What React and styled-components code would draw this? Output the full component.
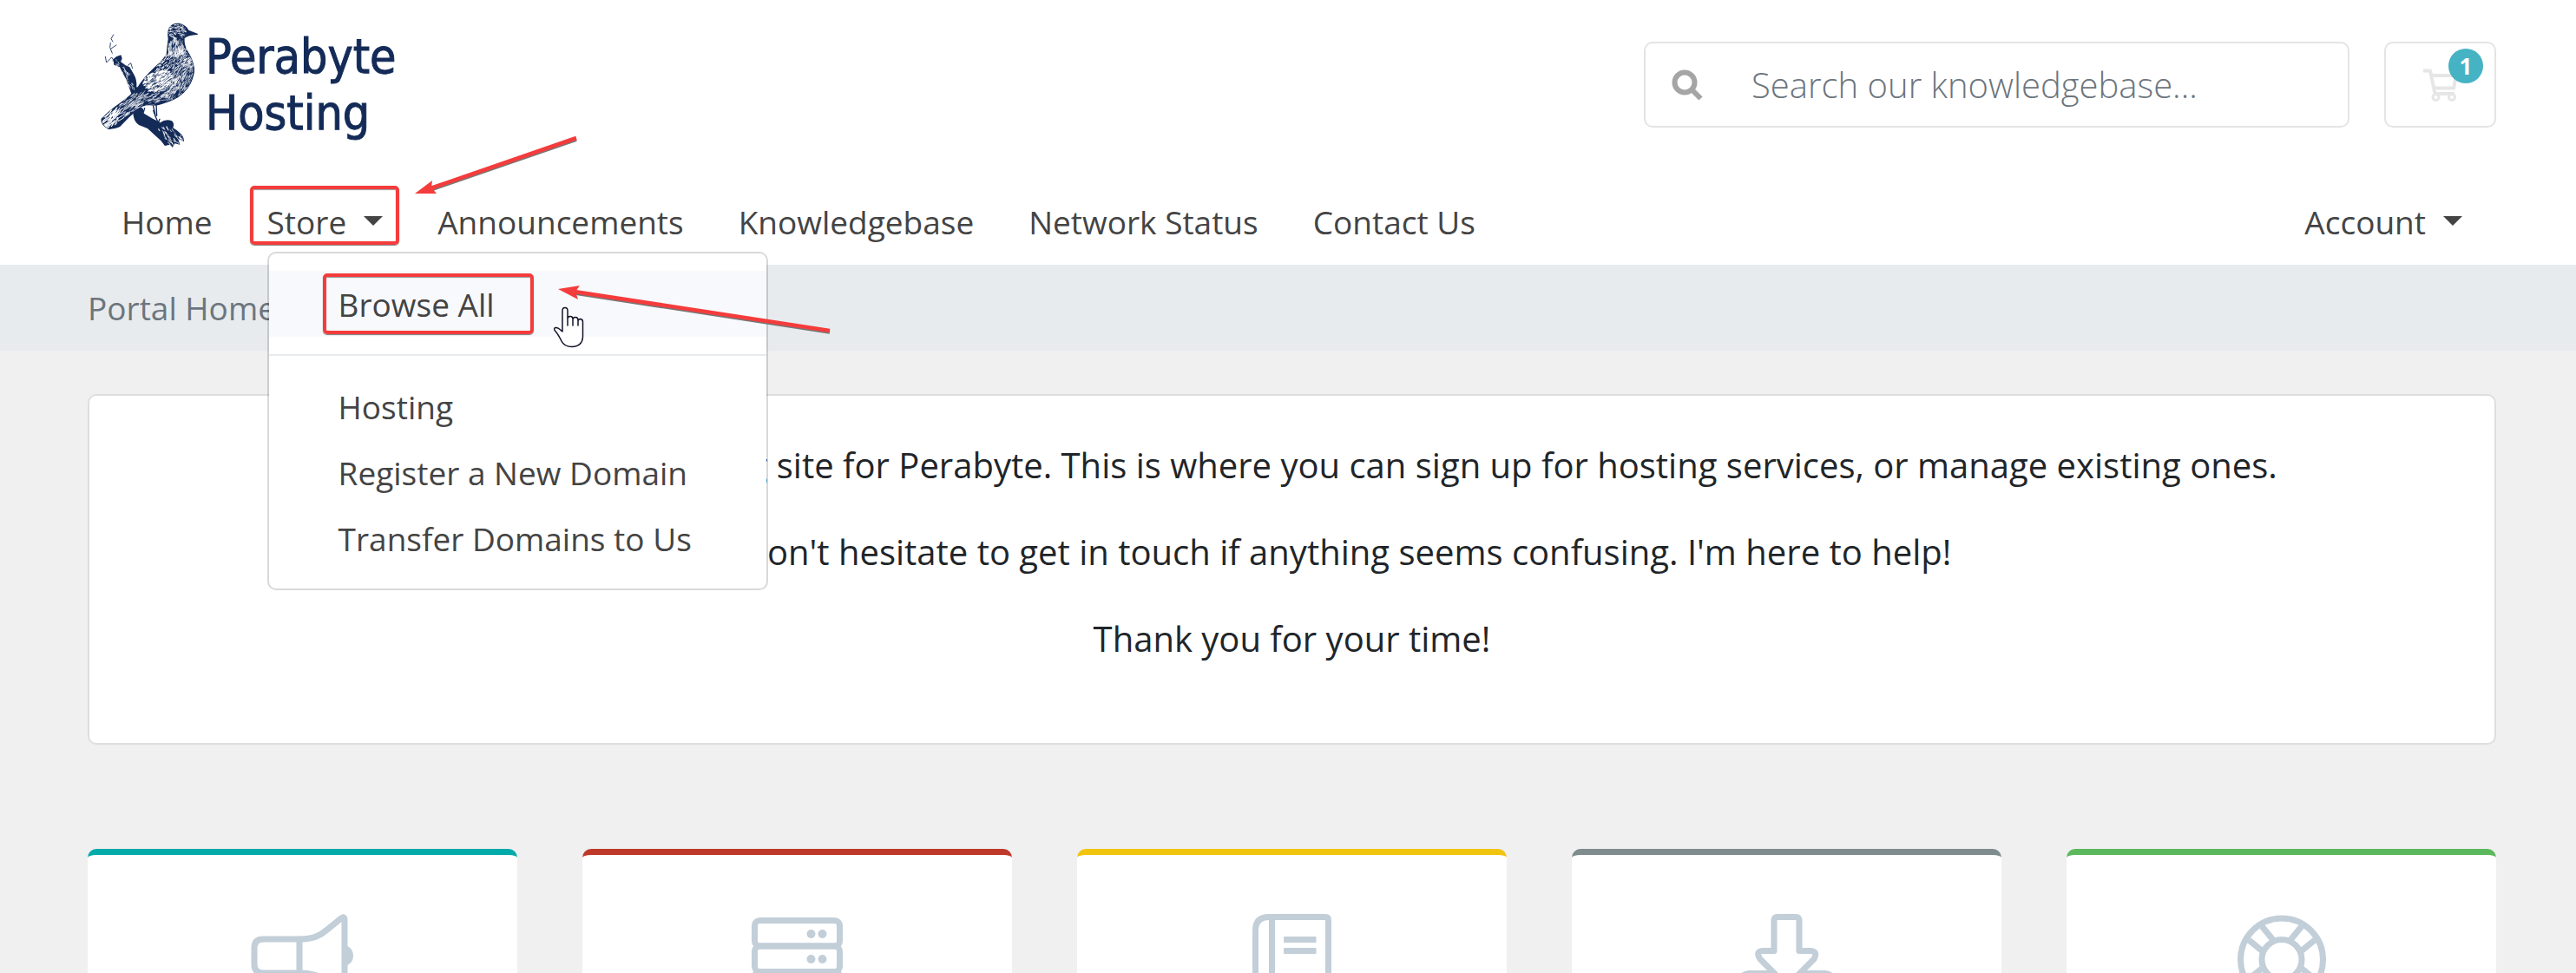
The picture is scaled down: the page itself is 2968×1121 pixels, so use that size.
import React from "react";
import styled, { createGlobalStyle } from "styled-components";

const GlobalStyle = createGlobalStyle`
  *, *::before, *::after { box-sizing: border-box; }
  body {
    margin: 0;
    background: #f0f0f0;
    color: #212529;
    font-family: "Open Sans", "Noto Sans", sans-serif;
    font-size: 40px;
    line-height: 60px;
  }
  a { color: inherit; text-decoration: none; }
`;

const Page = styled.div`
  height: 100vh;
  overflow: hidden;
`;

const Container = styled.div`
  padding: 0 92px 0 101px;
`;

const Header = styled.header`
  background: #fff;
`;

const TopBar = styled(Container)`
  display: flex;
  align-items: center;
  padding-top: 20px;
  padding-bottom: 20px;
`;

const Brand = styled.a`
  display: flex;
  align-items: center;
  margin-right: auto;
  padding-left: 9px;
  color: #142b58;
`;

const BrandName = styled.span`
  margin-left: -3px;
  font-family: "DejaVu Sans Condensed", "DejaVu Sans", sans-serif;
  font-stretch: condensed;
  font-size: 55px;
  line-height: 65px;
  -webkit-text-stroke: 1px #142b58;
`;

const SearchForm = styled.form`
  display: flex;
  align-items: center;
  width: 813px;
  height: 99px;
  border: 2px solid #e4e4e4;
  border-radius: 10px;
`;

const SearchButton = styled.button`
  display: flex;
  padding: 0 30px;
  border: 0;
  background: none;
`;

const SearchInput = styled.input`
  flex: 1;
  min-width: 0;
  padding: 0 26px;
  border: 0;
  outline: 0;
  background: none;
  font: 300 40px/60px "Open Sans", "Noto Sans", sans-serif;
  &::placeholder { color: #6c757d; opacity: 1; }
`;

const CartButton = styled.button`
  position: relative;
  display: flex;
  align-items: center;
  justify-content: center;
  width: 129px;
  height: 99px;
  margin-left: 40px;
  padding: 0;
  border: 2px solid #e4e4e4;
  border-radius: 10px;
  background: #fff;
`;

const CartBadge = styled.span`
  position: absolute;
  top: 6px;
  right: 13px;
  width: 40px;
  height: 40px;
  border-radius: 50%;
  background: #45b3c4;
  color: #fff;
  font: 700 26px/40px "Open Sans", "Noto Sans", sans-serif;
`;

const NavBar = styled(Container)`
  display: flex;
  justify-content: space-between;
  padding-top: 26px;
  padding-bottom: 15px;
`;

const NavList = styled.ul`
  display: flex;
  gap: 63px;
  margin: 0;
  padding: 0 39px;
  list-style: none;
`;

const NavItem = styled.li`
  position: relative;
`;

const NavLink = styled.a`
  display: flex;
  align-items: center;
  padding: 6px 0;
  color: #444;
  font-size: 37px;
  line-height: 57px;
`;

const Caret = styled.span`
  margin: 0 0 3px 20px;
  border: 11px solid transparent;
  border-top-color: #444;
  border-bottom: 0;
`;

const Menu = styled.div`
  position: absolute;
  z-index: 2;
  top: 100%;
  left: 0;
  width: 577px;
  padding: 20px 0;
  border: 2px solid rgba(0, 0, 0, 0.15);
  border-radius: 10px;
  background: #fff;
  background-clip: padding-box;
`;

const MenuLink = styled.a`
  position: relative;
  display: block;
  padding: 10px 80px 9px;
  background: ${(p) => (p.$hover ? "#f8f9fc" : "transparent")};
  color: #444;
  font-size: 37px;
  line-height: 57px;
  white-space: nowrap;
`;

const MenuDivider = styled.hr`
  height: 2px;
  margin: 20px 0;
  border: 0;
  background: #e7ebee;
`;

const Highlight = styled.span`
  position: absolute;
  z-index: 3;
  top: ${(p) => p.$top}px;
  left: ${(p) => p.$left}px;
  width: ${(p) => p.$width}px;
  height: ${(p) => p.$height}px;
  border: 4px solid #f43c3c;
  border-radius: 5px;
  box-shadow: 0 1px 1px rgba(0, 0, 0, 0.5), inset 0 1px 1px rgba(0, 0, 0, 0.4);
`;

const Annotations = styled.svg`
  position: absolute;
  z-index: 4;
  top: 0;
  left: 0;
  pointer-events: none;
`;

const Breadcrumb = styled(Container)`
  padding-top: 21px;
  padding-bottom: 21px;
  background: #e7ebee;
  color: #6c757d;
  font-size: 37px;
  line-height: 57px;
`;

const Main = styled.main`
  padding: 50px 92px 0 101px;
`;

const WelcomeCard = styled.section`
  padding: 50px;
  border: 2px solid #dedede;
  border-radius: 10px;
  background: #fff;
  text-align: center;
`;

const Paragraph = styled.p`
  margin: 0 0 40px;
`;

const Tiles = styled.div`
  display: grid;
  grid-template-columns: repeat(5, 1fr);
  gap: 75px;
  margin-top: 120px;
`;

const Tile = styled.a`
  display: flex;
  justify-content: center;
  padding: 65px 0;
  border-top: 7px solid ${(p) => p.$accent};
  border-radius: 10px;
  background: #fff;
`;

const INK = "#142b58";

// Small seeded generator, so the engraving is the same on each render.
function random(seed) {
  let s = seed;
  return () => {
    s = (s * 16807) % 2147483647;
    return s / 2147483647;
  };
}

// Short strokes scattered over an ellipse, all near one direction.
function hatch(seed, count, cx, cy, rx, ry, tilt, dir, len) {
  const r = random(seed);
  const t = (tilt * Math.PI) / 180;
  let d = "";
  for (let i = 0; i < count; i++) {
    const a = r() * Math.PI * 2;
    const q = Math.sqrt(r());
    const u = Math.cos(a) * q * rx;
    const v = Math.sin(a) * q * ry;
    const x = cx + u * Math.cos(t) - v * Math.sin(t);
    const y = cy + u * Math.sin(t) + v * Math.cos(t);
    const g = ((dir + (r() - 0.5) * 34) * Math.PI) / 180;
    const l = len * (0.4 + r());
    d += `M${x.toFixed(1)} ${y.toFixed(1)}l${(Math.cos(g) * l).toFixed(1)} ${(Math.sin(g) * l).toFixed(1)}`;
  }
  return d;
}

const BODY =
  "M354 57L322 44Q314 27 292 21Q266 18 254 36Q247 52 251 74Q247 100 245 128Q228 152 200 176Q168 206 146 240Q120 272 84 296Q44 324 20 350Q16 370 44 386Q62 388 84 378Q112 348 142 322Q164 302 186 304Q214 308 246 294Q292 280 318 246Q342 212 342 176Q336 142 318 116Q306 94 308 72Q320 62 352 60Z";
const BRANCH =
  "M128 322L150 308Q172 314 164 330L194 348L224 364Q242 350 264 358Q274 366 268 382Q292 396 300 412L306 428L286 420L292 440L274 436L266 450L256 440L240 444L226 426L202 404L180 384L150 372Q136 362 132 344Z";
const STUB =
  "M62 144L72 136L88 130L92 142L88 154L104 166L118 172L132 196Q144 216 142 240L152 252L124 264Q114 236 106 214Q92 190 84 172L64 164Z";

function Pigeon() {
  return (
    <svg width="130" height="155" viewBox="0 0 390 465" fill="none" strokeLinecap="round" aria-hidden="true">
      <defs>
        <clipPath id="bird"><path d={BODY} /></clipPath>
        <clipPath id="wood"><path d={BRANCH + STUB} /></clipPath>
      </defs>
      <path d={BRANCH + STUB} fill={INK} />
      <g clipPath="url(#wood)" stroke="#fff">
        <path d={hatch(5, 40, 100, 195, 66, 16, 60, 62, 9)} strokeWidth="2" />
        <path d={hatch(9, 60, 265, 415, 60, 26, 40, 50, 10)} strokeWidth="2.4" />
      </g>
      <path d="M62 60L54 74L60 84M52 88L50 104L58 124M72 96L54 108M34 136L38 156L56 138L64 150M60 150H78M112 166L122 158L128 176M290 400Q306 410 304 428M250 380L274 400" stroke={INK} strokeWidth="2.6" />
      <path d="M166 306L200 302L212 344L206 346L178 326Z" fill="#fff" />
      <path d="M198 298L208 344L226 384L240 392M210 300L212 340M222 352L210 382M208 344L200 322M170 314L164 334" stroke={INK} strokeWidth="4" />
      <path d={BODY} fill={INK} />
      <g clipPath="url(#bird)" stroke="#fff">
        <path d={hatch(11, 90, 282, 48, 32, 26, 0, 20, 5)} strokeWidth="2" />
        <path d={hatch(17, 90, 278, 100, 28, 32, 0, 88, 15)} strokeWidth="1.8" />
        <path d={hatch(23, 330, 270, 170, 76, 48, -40, -45, 6)} strokeWidth="2.2" />
        <path d={hatch(29, 230, 300, 210, 90, 34, -55, 120, 12)} strokeWidth="1.8" />
        <path d={hatch(31, 280, 212, 222, 52, 34, -20, -35, 10)} strokeWidth="3.2" />
        <path d={hatch(37, 100, 200, 276, 86, 22, -22, -20, 13)} strokeWidth="1.7" />
        <path d={hatch(41, 90, 110, 310, 66, 24, -40, -38, 16)} strokeWidth="1.8" />
        <path d={hatch(43, 90, 48, 358, 42, 26, -40, -45, 16)} strokeWidth="3" />
      </g>
      <g clipPath="url(#bird)" stroke={INK} strokeWidth="1.8">
        <path d={hatch(47, 55, 212, 226, 50, 30, -20, -35, 12)} />
        <path d="M310 58L352 58M20 350Q18 372 44 386M44 386L84 378L142 322" strokeWidth="3" />
        <path d="M318 116Q342 150 340 180Q340 214 318 246Q290 282 246 294" strokeWidth="4" />
      </g>
      <circle cx="294" cy="42" r="6" fill={INK} stroke="#fff" strokeWidth="2" />
    </svg>
  );
}

function SearchIcon() {
  return (
    <svg width="36" height="36" viewBox="0 0 36 36" fill="none" stroke="#a5a5a5" strokeWidth="6" aria-hidden="true">
      <circle cx="15" cy="15" r="11.5" />
      <path d="M23 23L33.500 33.500" />
    </svg>
  );
}

function CartIcon() {
  return (
    <svg width="42" height="38" viewBox="0 0 42 38" fill="none" stroke="#e6e6e6" strokeWidth="4" strokeLinejoin="round" aria-hidden="true">
      <path d="M1 2.500H9L14.500 29H37" />
      <path d="M11 8H39L36 22.500H14" />
      <circle cx="15.500" cy="33" r="3.500" strokeWidth="3" />
      <circle cx="34" cy="33" r="3.500" strokeWidth="3" />
    </svg>
  );
}

const TileIcon = ({ children }) => (
  <svg width="120" height="120" viewBox="0 0 120 120" fill="none" stroke="#c2ced8" strokeWidth="7" strokeLinejoin="round" strokeLinecap="round" aria-hidden="true">
    {children}
  </svg>
);

const tiles = [
  {
    label: "Announcements",
    accent: "#00aba9",
    icon: (
      <TileIcon>
        <path d="M56 32H14Q4 32 4 42V61Q4 71 14 71H56Z" />
        <path d="M56 32C72 32 80 28 88 21L104 8Q108 5 108 10V94Q108 98 104 95L88 82C80 75 72 71 56 71" />
        <path d="M111 40Q118 43 118 51Q118 59 111 62Z" fill="#c2ced8" stroke="none" />
        <path d="M22 72L30 108H50L42 72" />
      </TileIcon>
    ),
  },
  {
    label: "Network Status",
    accent: "#bf392b",
    icon: (
      <TileIcon>
        <rect x="10.500" y="10.500" width="98" height="29.500" rx="6" />
        <rect x="10.500" y="40" width="98" height="29.500" rx="6" />
        <rect x="10.500" y="69.500" width="98" height="29.500" rx="6" />
        <g fill="#c2ced8" stroke="none">
          <circle cx="75.500" cy="26" r="5" /><circle cx="88.500" cy="26" r="5" />
          <circle cx="75.500" cy="55" r="5" /><circle cx="88.500" cy="55" r="5" />
          <circle cx="75.500" cy="84" r="5" /><circle cx="88.500" cy="84" r="5" />
        </g>
      </TileIcon>
    ),
  },
  {
    label: "Knowledgebase",
    accent: "#f1c40f",
    icon: (
      <TileIcon>
        <path d="M33 6.500H98Q101.500 6.500 101.500 10V104H33Q17.500 104 17.500 90V22Q17.500 6.500 33 6.500Z" />
        <path d="M36.500 7V84" />
        <path d="M51 29.500H87V35.500H51ZM51 42.500H87V48.500H51Z" fill="#c2ced8" strokeWidth="1" />
      </TileIcon>
    ),
  },
  {
    label: "Downloads",
    accent: "#7f8c8d",
    icon: (
      <TileIcon>
        <path d="M45 45.500H32Q23 46 29 55L56 82Q60 85 64 82L91 55Q96 46 87 45.500H74V11Q74 6.500 70 6.500H49Q45 6.500 45 11Z" strokeLinecap="butt" />
        <path d="M40 71.500H16Q8 72 8 80V100Q8 108 16 108H104Q112 108 112 100V80Q112 72 104 71.500H80" strokeLinecap="butt" />
      </TileIcon>
    ),
  },
  {
    label: "Contact Us",
    accent: "#5cb85c",
    icon: (
      <TileIcon>
        <circle cx="60" cy="55.500" r="47.500" />
        <circle cx="60" cy="55.500" r="23" />
        <path d="M37 17L50 33M22 33L38 46M83 17L70 33M98 33L82 46M37 94L50 78M22 78L38 65M83 94L70 78M98 78L82 65" strokeLinecap="butt" />
      </TileIcon>
    ),
  },
];

export default function App() {
  return (
    <Page>
      <GlobalStyle />
      <Header>
        <TopBar>
          <Brand href="#">
            <Pigeon />
            <BrandName>Perabyte<br />Hosting</BrandName>
          </Brand>
          <SearchForm role="search" onSubmit={(e) => e.preventDefault()}>
            <SearchButton type="submit" aria-label="Search"><SearchIcon /></SearchButton>
            <SearchInput type="search" aria-label="Search our knowledgebase" placeholder="Search our knowledgebase..." />
          </SearchForm>
          <CartButton type="button" aria-label="Shopping cart">
            <CartIcon />
            <CartBadge>1</CartBadge>
          </CartButton>
        </TopBar>
        <NavBar as="nav">
          <NavList>
            <NavItem><NavLink href="#">Home</NavLink></NavItem>
            <NavItem>
              <NavLink href="#" aria-expanded="true">Store<Caret /></NavLink>
              <Highlight $top={-7} $left={-20} $width={172} $height={68} />
              <Menu>
                <MenuLink href="#" $hover>
                  Browse All
                  <Highlight $top={3} $left={62} $width={243} $height={70} />
                </MenuLink>
                <MenuDivider />
                <MenuLink href="#">Hosting</MenuLink>
                <MenuLink href="#">Register a New Domain</MenuLink>
                <MenuLink href="#">Transfer Domains to Us</MenuLink>
              </Menu>
            </NavItem>
            <NavItem><NavLink href="#">Announcements</NavLink></NavItem>
            <NavItem><NavLink href="#">Knowledgebase</NavLink></NavItem>
            <NavItem><NavLink href="#">Network Status</NavLink></NavItem>
            <NavItem><NavLink href="#">Contact Us</NavLink></NavItem>
          </NavList>
          <NavList>
            <NavItem><NavLink href="#">Account<Caret /></NavLink></NavItem>
          </NavList>
        </NavBar>
      </Header>
      <Breadcrumb as="nav" aria-label="Breadcrumb"><a href="#">Portal Home</a></Breadcrumb>
      <Main>
        <WelcomeCard>
          <Paragraph>Hello! Welcome to the billing site for Perabyte. This is where you can sign up for hosting services, or manage existing ones.</Paragraph>
          <Paragraph>Please don't hesitate to get in touch if anything seems confusing. I'm here to help!</Paragraph>
          <Paragraph>Thank you for your time!</Paragraph>
        </WelcomeCard>
        <Tiles>
          {tiles.map((t) => (
            <Tile key={t.label} href="#" aria-label={t.label} $accent={t.accent}>{t.icon}</Tile>
          ))}
        </Tiles>
      </Main>
      <Annotations width="1000" height="450" viewBox="0 0 1000 450" fill="none" aria-hidden="true">
        <g transform="translate(0 1.500)" stroke="#777" fill="#777">
          <path d="M664 159L496 217" strokeWidth="4.500" />
          <path d="M956 381L662 336" strokeWidth="4.500" />
        </g>
        <g stroke="#f43c3c" strokeWidth="4.500">
          <path d="M664 159L496 217" />
          <path d="M956 381L662 336" />
        </g>
        <g fill="#f43c3c">
          <path d="M478 223L498 208L497 216L503 223Z" />
          <path d="M643 333L668 329L663 336L666 345Z" />
        </g>
        <path d="M648 378V358Q648 354.500 651 354.500Q654 354.500 654 358V375V367Q654 364.500 657 364.500Q660 364.500 660 368V375V368Q660 365.500 663 365.500Q666 365.500 666 369V375V370Q666 367.500 669 367.500Q671.500 368 671.500 371V388Q671 399 659 399.500Q650 399.500 647 393Q643 385 639.500 381Q637.500 378.500 640 377.500Q643 377 648 382Z" fill="#fff" stroke="#14142b" strokeWidth="1.500" strokeLinejoin="round" />
      </Annotations>
    </Page>
  );
}
